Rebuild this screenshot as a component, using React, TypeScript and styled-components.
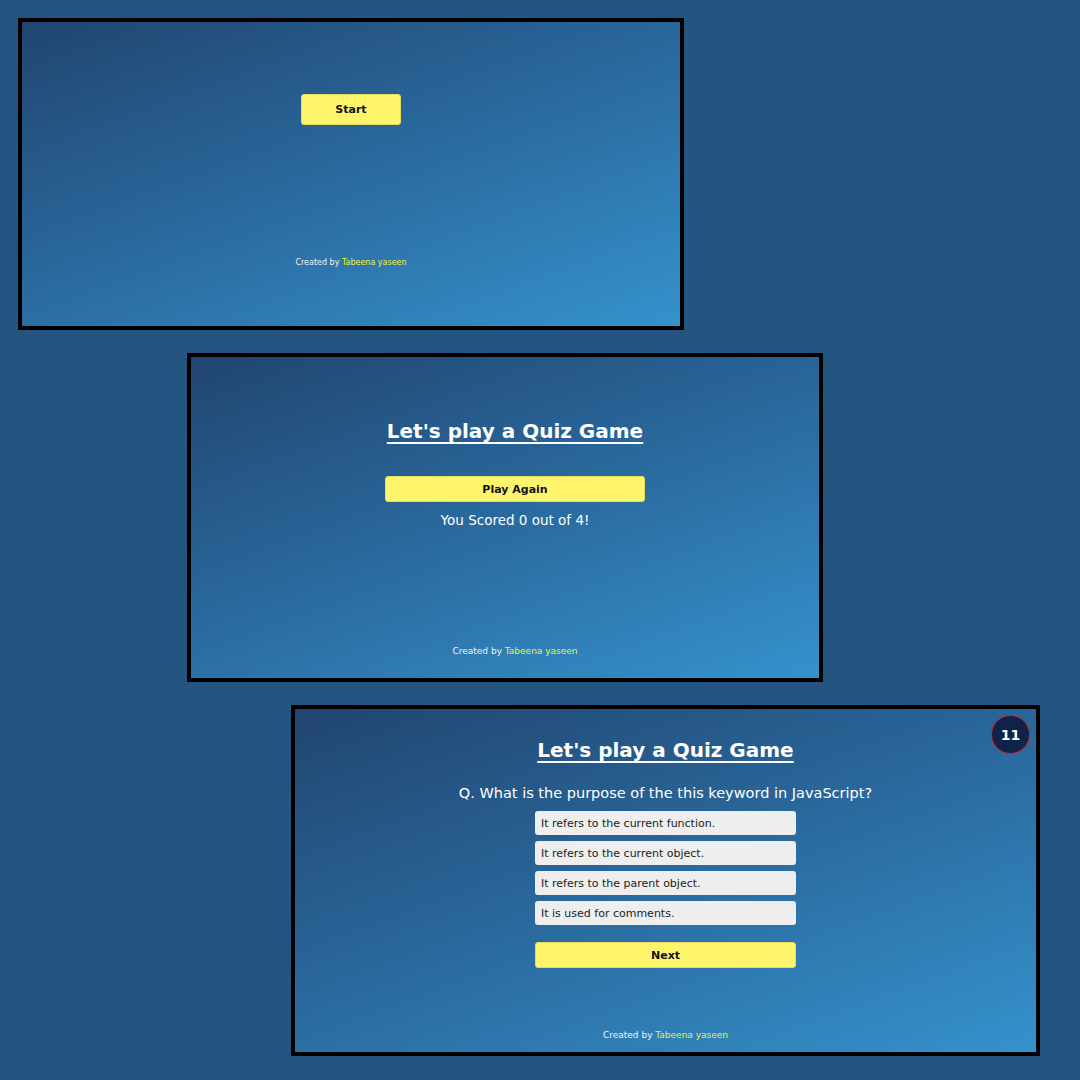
import React from "react";
import styled, { createGlobalStyle } from "styled-components";

const Global = createGlobalStyle`
  html, body { margin: 0; padding: 0; background: #245580; }
  body { width: 1080px; height: 1080px; overflow: hidden; font-family: "DejaVu Sans", Verdana, sans-serif; }
`;

const Page = styled.div`
  display: flex;
  flex-direction: column;
  padding-top: 18px;
  gap: 23px;
  width: 1080px;
  height: 1080px;
  box-sizing: border-box;
`;

const Panel = styled.section<{ $left: number; $w: number; $h: number; $pt: number; $pb: number; $shift?: number }>`
  margin-left: ${(p) => p.$left}px;
  width: ${(p) => p.$w}px;
  height: ${(p) => p.$h}px;
  box-sizing: border-box;
  border: 4px solid #000;
  background: linear-gradient(160deg, #21456f 0%, #2a6a9f 50%, #3592cc 100%);
  display: flex;
  flex-direction: column;
  align-items: center;
  padding-top: ${(p) => p.$pt}px;
  padding-bottom: ${(p) => p.$pb}px;
  padding-left: ${(p) => p.$shift ?? 0}px;
  position: relative;
  color: #fff;
`;

const Title = styled.h1`
  margin: 0;
  font-size: 20px;
  line-height: 26px;
  font-weight: bold;
  text-decoration: underline;
  text-decoration-thickness: 2px;
  text-underline-offset: 4px;
  color: #fff;
`;

const YellowButton = styled.button<{ $w: number; $h: number; $mt: number }>`
  margin-top: ${(p) => p.$mt}px;
  width: ${(p) => p.$w}px;
  height: ${(p) => p.$h}px;
  background: #fff56c;
  border: 1px solid #e8dc5a;
  border-radius: 3px;
  font-family: "DejaVu Sans", Verdana, sans-serif;
  font-weight: bold;
  font-size: 11px;
  color: #111;
  padding: 0;
`;

const Score = styled.p`
  margin: 8px 0 0;
  font-size: 13.5px;
  line-height: 20px;
  color: #fff;
`;

const Question = styled.p`
  margin: 20px 0 0;
  font-size: 14.5px;
  line-height: 20px;
  color: #fff;
`;

const Options = styled.div`
  margin-top: 8px;
  display: flex;
  flex-direction: column;
  gap: 6px;
  width: 261px;
`;

const Option = styled.div`
  height: 24px;
  box-sizing: border-box;
  background: #eeeeee;
  border-radius: 3px;
  padding-left: 6px;
  display: flex;
  align-items: center;
  font-size: 11px;
  color: #222;
`;

const Footer = styled.footer<{ $size: number }>`
  margin-top: auto;
  font-size: ${(p) => p.$size}px;
  line-height: 12px;
  color: #f0f4f8;
`;

const Name = styled.span`
  color: #eef23a;
`;

const Timer = styled.div`
  position: absolute;
  top: 6px;
  right: 6px;
  width: 39px;
  height: 39px;
  box-sizing: border-box;
  border-radius: 50%;
  background: #0f2247;
  border: 1.5px solid #d42030;
  display: flex;
  align-items: center;
  justify-content: center;
  font-weight: bold;
  font-size: 14px;
  color: #fff;
`;

const Credit = ({ size }: { size: number }) => (
  <Footer $size={size}>
    Created by <Name>Tabeena yaseen</Name>
  </Footer>
);

export default function App() {
  return (
    <>
      <Global />
      <Page>
        <Panel $left={18} $w={666} $h={312} $pt={72} $pb={57}>
          <YellowButton $w={100} $h={31} $mt={0}>Start</YellowButton>
          <Credit size={8} />
        </Panel>
        <Panel $left={187} $w={636} $h={329} $pt={61} $pb={21} $shift={20}>
          <Title>Let's play a Quiz Game</Title>
          <YellowButton $w={260} $h={26} $mt={32}>Play Again</YellowButton>
          <Score>You Scored 0 out of 4!</Score>
          <Credit size={9} />
        </Panel>
        <Panel $left={291} $w={749} $h={351} $pt={28} $pb={11}>
          <Timer>11</Timer>
          <Title>Let's play a Quiz Game</Title>
          <Question>Q. What is the purpose of the this keyword in JavaScript?</Question>
          <Options>
            <Option>It refers to the current function.</Option>
            <Option>It refers to the current object.</Option>
            <Option>It refers to the parent object.</Option>
            <Option>It is used for comments.</Option>
          </Options>
          <YellowButton $w={261} $h={26} $mt={17}>Next</YellowButton>
          <Credit size={9} />
        </Panel>
      </Page>
    </>
  );
}
